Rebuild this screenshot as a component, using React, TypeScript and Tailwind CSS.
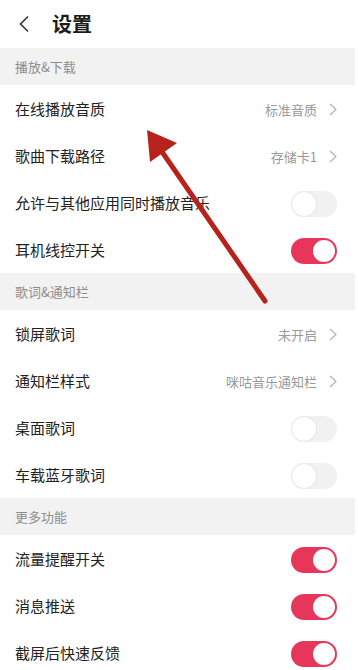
import React from "react";

type Row =
  | { kind: "link"; label: string; value: string }
  | { kind: "toggle"; label: string; on: boolean };

const sections: { title: string; rows: Row[] }[] = [
  {
    title: "播放&下载",
    rows: [
      { kind: "link", label: "在线播放音质", value: "标准音质" },
      { kind: "link", label: "歌曲下载路径", value: "存储卡1" },
      { kind: "toggle", label: "允许与其他应用同时播放音乐", on: false },
      { kind: "toggle", label: "耳机线控开关", on: true },
    ],
  },
  {
    title: "歌词&通知栏",
    rows: [
      { kind: "link", label: "锁屏歌词", value: "未开启" },
      { kind: "link", label: "通知栏样式", value: "咪咕音乐通知栏" },
      { kind: "toggle", label: "桌面歌词", on: false },
      { kind: "toggle", label: "车载蓝牙歌词", on: false },
    ],
  },
  {
    title: "更多功能",
    rows: [
      { kind: "toggle", label: "流量提醒开关", on: true },
      { kind: "toggle", label: "消息推送", on: true },
      { kind: "toggle", label: "截屏后快速反馈", on: true },
    ],
  },
];

function Toggle({ on }: { on: boolean }) {
  if (on) {
    return (
      <div className="w-[46px] h-[26px] rounded-full bg-[#e8365a] flex items-center justify-end pr-[2px]">
        <div className="w-[22px] h-[22px] rounded-full bg-white" />
      </div>
    );
  }
  return (
    <div className="w-[46px] h-[26px] rounded-full bg-[#f1f1f1] flex items-center justify-start pl-[1px]">
      <div className="w-[24px] h-[24px] rounded-full bg-white shadow-[0_0_2px_rgba(0,0,0,0.14)]" />
    </div>
  );
}

function Chevron() {
  return (
    <svg width="8" height="13" viewBox="0 0 8 13" className="ml-[12px]">
      <polyline points="1,1 7,6.5 1,12" fill="none" stroke="#b5b5b5" strokeWidth="1.3" />
    </svg>
  );
}

export default function App() {
  return (
    <div
      className="relative w-[358px] h-[670px] overflow-hidden bg-white"
      style={{ fontFamily: '"Noto Sans CJK SC", "Noto Sans", sans-serif' }}
    >
      <div className="w-[355px]">
        <div className="h-[48px] flex items-center pl-[18px]">
          <svg width="12" height="18" viewBox="0 0 12 18">
            <polyline points="10,1.5 2.5,9 10,16.5" fill="none" stroke="#333" strokeWidth="1.6" />
          </svg>
          <span className="ml-[22px] text-[20px] font-bold text-[#1d1d1d] leading-none">设置</span>
        </div>
        {sections.map((s) => (
          <div key={s.title}>
            <div className="h-[37px] bg-[#f2f2f2] flex items-center pl-[15px] text-[13px] text-[#8e8e8e]">
              {s.title}
            </div>
            {s.rows.map((r) => (
              <div key={r.label} className="h-[47px] flex items-center pl-[15px] pr-[18px] pt-[2px]">
                <span className="flex-1 text-[15px] text-[#222] whitespace-nowrap">{r.label}</span>
                {r.kind === "link" ? (
                  <div className="flex items-center">
                    <span className="text-[13px] text-[#999]">{r.value}</span>
                    <Chevron />
                  </div>
                ) : (
                  <Toggle on={r.on} />
                )}
              </div>
            ))}
          </div>
        ))}
      </div>
      <svg
        className="absolute left-0 top-0 pointer-events-none"
        width="358"
        height="670"
        viewBox="0 0 358 670"
      >
        <line x1="265" y1="301" x2="158" y2="146" stroke="#b8221d" strokeWidth="5" strokeLinecap="round" />
        <polygon points="147,130 177,143 150,162" fill="#b8221d" />
      </svg>
    </div>
  );
}
